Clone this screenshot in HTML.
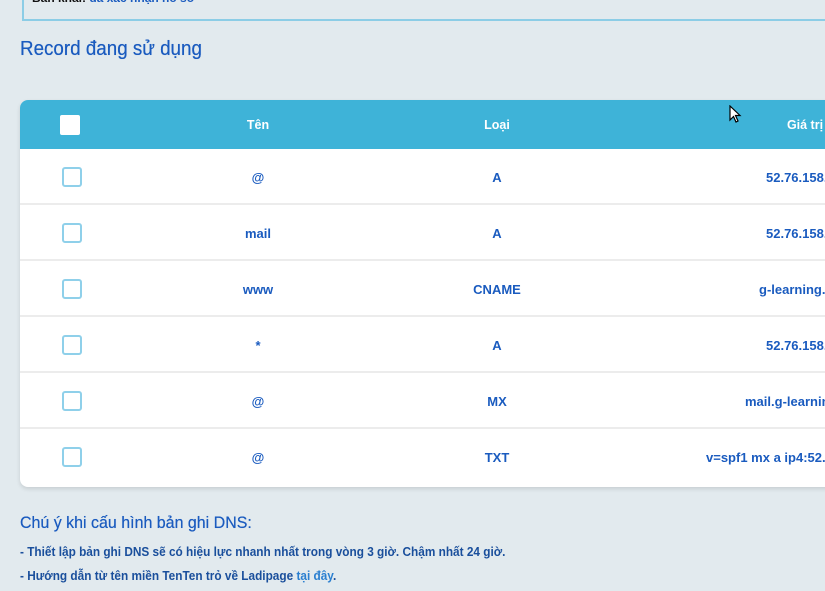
<!DOCTYPE html>
<html><head><meta charset="utf-8"><style>
*{margin:0;padding:0;box-sizing:border-box}
html,body{width:825px;height:591px;overflow:hidden;background:#e2eaee;font-family:"Liberation Sans",sans-serif}
.abs{position:absolute;white-space:nowrap}
.sx{transform-origin:left center;transform:scaleX(.94)}
.topbox{position:absolute;left:22px;top:-20px;width:820px;height:41px;border:1px solid #8ccde6;border-left:2px solid #8ccde6;border-bottom:2px solid #8ccde6}
.card{position:absolute;left:20px;top:100px;width:830px;height:387px;background:#fff;border-radius:8px;overflow:hidden;box-shadow:0 2px 4px rgba(0,0,0,.12)}
.head{position:absolute;left:0;top:0;width:100%;height:49px;background:#3eb3d8}
.hcb{position:absolute;left:40px;top:15px;width:20px;height:20px;background:#fff;border-radius:2px}
.ht{position:absolute;top:18px;color:#fff;font-weight:bold;font-size:12.5px;transform:translateX(-50%)}
.row{position:absolute;left:0;width:100%;height:56px;border-bottom:2px solid #ececec}
.cb{position:absolute;left:42px;top:18px;width:20px;height:20px;border:2px solid #8fd0ea;border-radius:3px}
.c{position:absolute;top:21px;color:#1a5bbf;font-weight:bold;font-size:13px;white-space:nowrap}
.mid{transform:translateX(-50%)}
</style></head><body>
<div class="topbox"></div>
<div class="abs" style="left:32px;top:-9px;font-size:12px;font-weight:bold;color:#111">Bản khai: <span style="color:#1a5bbf">đã xác nhận hồ sơ</span></div>
<div class="abs sx" style="left:20px;top:38px;font-size:20px;color:#1a5bbf;text-shadow:0 0 .4px #1a5bbf">Record đang sử dụng</div>
<div class="card">
<div class="head">
<div class="hcb"></div>
<div class="ht" style="left:238px">Tên</div>
<div class="ht" style="left:477px">Loại</div>
<div class="ht" style="left:785px">Giá trị</div>
</div>
<div class="row" style="top:49px"><div class="cb"></div><div class="c mid" style="left:238px">@</div><div class="c mid" style="left:477px">A</div><div class="c" style="left:746px">52.76.158.</div></div>
<div class="row" style="top:105px"><div class="cb"></div><div class="c mid" style="left:238px">mail</div><div class="c mid" style="left:477px">A</div><div class="c" style="left:746px">52.76.158.</div></div>
<div class="row" style="top:161px"><div class="cb"></div><div class="c mid" style="left:238px">www</div><div class="c mid" style="left:477px">CNAME</div><div class="c" style="left:739px">g-learning.com</div></div>
<div class="row" style="top:217px"><div class="cb"></div><div class="c mid" style="left:238px">*</div><div class="c mid" style="left:477px">A</div><div class="c" style="left:746px">52.76.158.</div></div>
<div class="row" style="top:273px"><div class="cb"></div><div class="c mid" style="left:238px">@</div><div class="c mid" style="left:477px">MX</div><div class="c" style="left:725px">mail.g-learning</div></div>
<div class="row" style="top:329px;border-bottom:none"><div class="cb"></div><div class="c mid" style="left:238px">@</div><div class="c mid" style="left:477px">TXT</div><div class="c" style="left:686px">v=spf1 mx a ip4:52.76</div></div>
</div>
<svg class="abs" style="left:729px;top:105px" width="14" height="20" viewBox="0 0 14 20"><path d="M1 1 L1 15 L4.5 11.5 L7 17 L9 16 L6.5 10.5 L11 10.5 Z" fill="#fff" stroke="#000" stroke-width="1.2"/></svg>
<div class="abs sx" style="left:20px;top:513px;font-size:17px;color:#1a5bbf;text-shadow:0 0 .4px #1a5bbf">Chú ý khi cấu hình bản ghi DNS:</div>
<div class="abs sx" style="left:20px;top:545px;font-size:12.5px;font-weight:bold;color:#1a4f9c;transform:scaleX(.945)">- Thiết lập bản ghi DNS sẽ có hiệu lực nhanh nhất trong vòng 3 giờ. Chậm nhất 24 giờ.</div>
<div class="abs sx" style="left:20px;top:569px;font-size:12.5px;font-weight:bold;color:#1a4f9c;transform:scaleX(.945)">- Hướng dẫn từ tên miền TenTen trỏ về Ladipage <span style="color:#2a7fd0">tại đây</span>.</div>
</body></html>
